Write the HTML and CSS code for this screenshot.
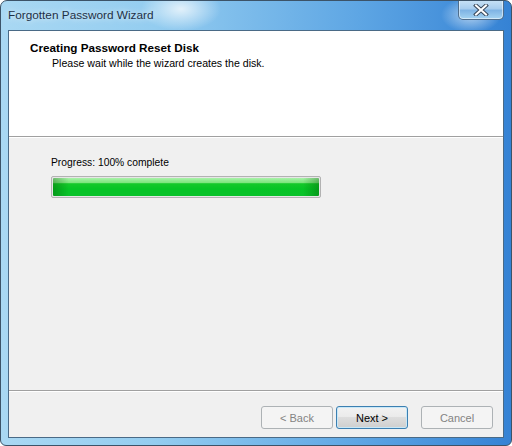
FILE: index.html
```html
<!DOCTYPE html>
<html>
<head>
<meta charset="utf-8">
<link rel="stylesheet" href="styles.css">
</head>
<body>
<div class="window">
  <div class="titlebar">
    <span class="title">Forgotten Password Wizard</span>
    <div class="close">
      <svg width="16" height="12" viewBox="0 0 16 12">
        <path d="M3 1.5 L13 10.5 M13 1.5 L3 10.5" stroke="#3b4a5c" stroke-width="4" stroke-linecap="square"/>
        <path d="M3 1.5 L13 10.5 M13 1.5 L3 10.5" stroke="#ffffff" stroke-width="2" stroke-linecap="square"/>
      </svg>
    </div>
  </div>
  <div class="client">
    <div class="header">
      <div class="h-title">Creating Password Reset Disk</div>
      <div class="h-sub">Please wait while the wizard creates the disk.</div>
    </div>
    <div class="body">
      <div class="label">Progress: 100% complete</div>
      <div class="progress"><div class="fill"></div></div>
    </div>
    <div class="footer">
      <button class="btn disabled">&lt; Back</button>
      <button class="btn default">Next &gt;</button>
      <button class="btn disabled cancel">Cancel</button>
    </div>
  </div>
</div>
</body>
</html>
```
FILE: styles.css
```css
html, body {
  margin: 0;
  padding: 0;
  background: #ffffff;
}
.window {
  width: 512px;
  height: 446px;
  box-sizing: border-box;
  border: 1px solid #3c5368;
  border-radius: 7px 7px 6px 6px;
  background:
    radial-gradient(ellipse 40px 22px at 180px 8px, rgba(255,255,255,0.75), rgba(255,255,255,0) 100%),
    radial-gradient(ellipse 30px 18px at 470px 14px, rgba(255,255,255,0.6), rgba(255,255,255,0) 100%),
    linear-gradient(90deg, #a9d8f3 0%, #94cdf0 30%, #5ea6e4 70%, #3582d4 100%);
  display: flex;
  flex-direction: column;
  font-family: "Liberation Sans", Arial, sans-serif;
  position: relative;
  overflow: hidden;
}
.titlebar {
  height: 29px;
  flex: none;
  padding-left: 7px;
  display: flex;
  align-items: center;
  padding-bottom: 1px;
  box-sizing: border-box;
}
.title {
  font-family: "Liberation Sans", Arial, sans-serif;
  font-size: 11.8px;
  color: #1e3046;
  text-shadow: 0 0 6px rgba(255,255,255,0.9);
}
.close {
  position: absolute;
  left: 457px;
  top: -1px;
  width: 46px;
  height: 20px;
  box-sizing: border-box;
  border: 1px solid #4f6d8c;
  border-top: none;
  border-radius: 0 0 5px 5px;
  background: linear-gradient(180deg, #c9e3f6 0%, #a8cdee 45%, #7fb4e4 55%, #a5d4f2 100%);
  box-shadow: inset 0 0 0 1px rgba(255,255,255,0.5);
  display: flex;
  align-items: center;
  justify-content: center;
}
.client {
  margin: 0 7px;
  flex: 1;
  border: 1px solid #4a6a86;
  background: #f0f0f0;
  display: flex;
  flex-direction: column;
  margin-bottom: 7px;
}
.header {
  height: 106px;
  flex: none;
  background: #ffffff;
  border-bottom: 1px solid #a0a0a0;
  box-shadow: 0 1px 0 #ffffff;
  box-sizing: border-box;
  padding-top: 10px;
}
.h-title {
  font-family: "Liberation Sans", Arial, sans-serif;
  font-weight: bold;
  font-size: 11.7px;
  color: #000;
  padding-left: 21px;
  line-height: 13px;
}
.h-sub {
  font-family: "Liberation Sans", Arial, sans-serif;
  font-size: 10.6px;
  color: #000;
  padding-left: 43px;
  line-height: 13px;
  margin-top: 3px;
}
.body {
  flex: 1;
  padding: 19px 0 0 42px;
  border-bottom: 1px solid #a0a0a0;
  box-shadow: 0 1px 0 #ffffff;
}
.label {
  font-size: 10.3px;
  line-height: 13px;
  color: #000;
}
.progress {
  margin-top: 7px;
  width: 270px;
  height: 22px;
  box-sizing: border-box;
  border: 1px solid #b2b2b2;
  border-radius: 2px;
  background: #e6e6e6;
  padding: 1px;
}
.fill {
  height: 100%;
  border-radius: 1px;
  background:
    linear-gradient(90deg, rgba(0,80,0,0.35) 0%, rgba(0,80,0,0) 6%, rgba(0,80,0,0) 94%, rgba(0,80,0,0.35) 100%),
    linear-gradient(180deg, #a9f2a9 0%, #7fe57f 25%, #15c82a 32%, #06c425 60%, #09c22a 100%);
}
.footer {
  height: 46px;
  flex: none;
  display: flex;
  justify-content: flex-end;
  align-items: flex-start;
  padding: 15px 10px 0 0;
  box-sizing: border-box;
  gap: 3px;
}
.btn {
  width: 72px;
  height: 23px;
  box-sizing: border-box;
  font-family: "Liberation Sans", Arial, sans-serif;
  font-size: 11px;
  border-radius: 3px;
  padding: 0;
  margin: 0;
}
.btn.disabled {
  border: 1px solid #adb2b5;
  background: #f4f4f4;
  color: #838383;
}
.btn.default {
  border: 1px solid #3c7fb1;
  background: linear-gradient(180deg, #f2f2f2 0%, #ebebeb 45%, #dddddd 50%, #cfcfcf 100%);
  box-shadow: inset 0 0 0 1px #c8e8f8;
  color: #000;
}
.btn.cancel {
  margin-left: 10px;
}
```
